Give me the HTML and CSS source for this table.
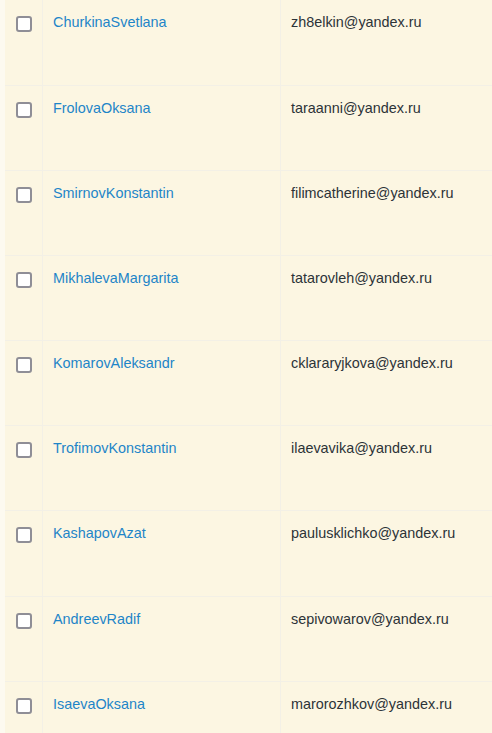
FILE: index.html
```html
<!DOCTYPE html>
<html lang="en">
<head>
<meta charset="utf-8">
<title>Users</title>
<link rel="stylesheet" href="styles.css">
</head>
<body>
<div class="wrap">
  <div class="users">
    <div class="row"><div class="check"><span class="box"></span></div><div class="name"><a href="#">ChurkinaSvetlana</a></div><div class="email">zh8elkin@yandex.ru</div></div>
    <div class="row"><div class="check"><span class="box"></span></div><div class="name"><a href="#">FrolovaOksana</a></div><div class="email">taraanni@yandex.ru</div></div>
    <div class="row"><div class="check"><span class="box"></span></div><div class="name"><a href="#">SmirnovKonstantin</a></div><div class="email">filimcatherine@yandex.ru</div></div>
    <div class="row"><div class="check"><span class="box"></span></div><div class="name"><a href="#">MikhalevaMargarita</a></div><div class="email">tatarovleh@yandex.ru</div></div>
    <div class="row"><div class="check"><span class="box"></span></div><div class="name"><a href="#">KomarovAleksandr</a></div><div class="email">cklararyjkova@yandex.ru</div></div>
    <div class="row"><div class="check"><span class="box"></span></div><div class="name"><a href="#">TrofimovKonstantin</a></div><div class="email">ilaevavika@yandex.ru</div></div>
    <div class="row"><div class="check"><span class="box"></span></div><div class="name"><a href="#">KashapovAzat</a></div><div class="email">paulusklichko@yandex.ru</div></div>
    <div class="row"><div class="check"><span class="box"></span></div><div class="name"><a href="#">AndreevRadif</a></div><div class="email">sepivowarov@yandex.ru</div></div>
    <div class="row"><div class="check"><span class="box"></span></div><div class="name"><a href="#">IsaevaOksana</a></div><div class="email">marorozhkov@yandex.ru</div></div>
  </div>
</div>
</body>
</html>
```

FILE: styles.css
```css
html, body {
  margin: 0;
  padding: 0;
  background: #fdfaf0;
}

body {
  font-family: "Liberation Sans", Arial, sans-serif;
  font-size: 14.4px;
  line-height: 20px;
  color: #2c3338;
  overflow: hidden;
}

.wrap {
  padding-left: 5px;
  height: 733px;
  overflow: hidden;
}

.users {
  background: #fcf6e2;
}

.row {
  display: grid;
  grid-template-columns: 37px 238px 1fr;
  height: 85.2px;
  box-sizing: border-box;
  border-bottom: 1px solid #f3f0e6;
}

.row:first-child {
  height: 85.5px;
}

.check {
  padding: 16px 0 0 11px;
}

.box {
  display: block;
  width: 16px;
  height: 16px;
  box-sizing: border-box;
  border: 2px solid #8f8e96;
  border-radius: 3px;
  background: #ffffff;
}

.name,
.email {
  border-left: 1px solid #f3f0e6;
  padding: 12px 10px 0 10px;
}

.name a {
  color: #1e85c8;
  text-decoration: none;
}

.email {
  color: #2c3338;
}
```
